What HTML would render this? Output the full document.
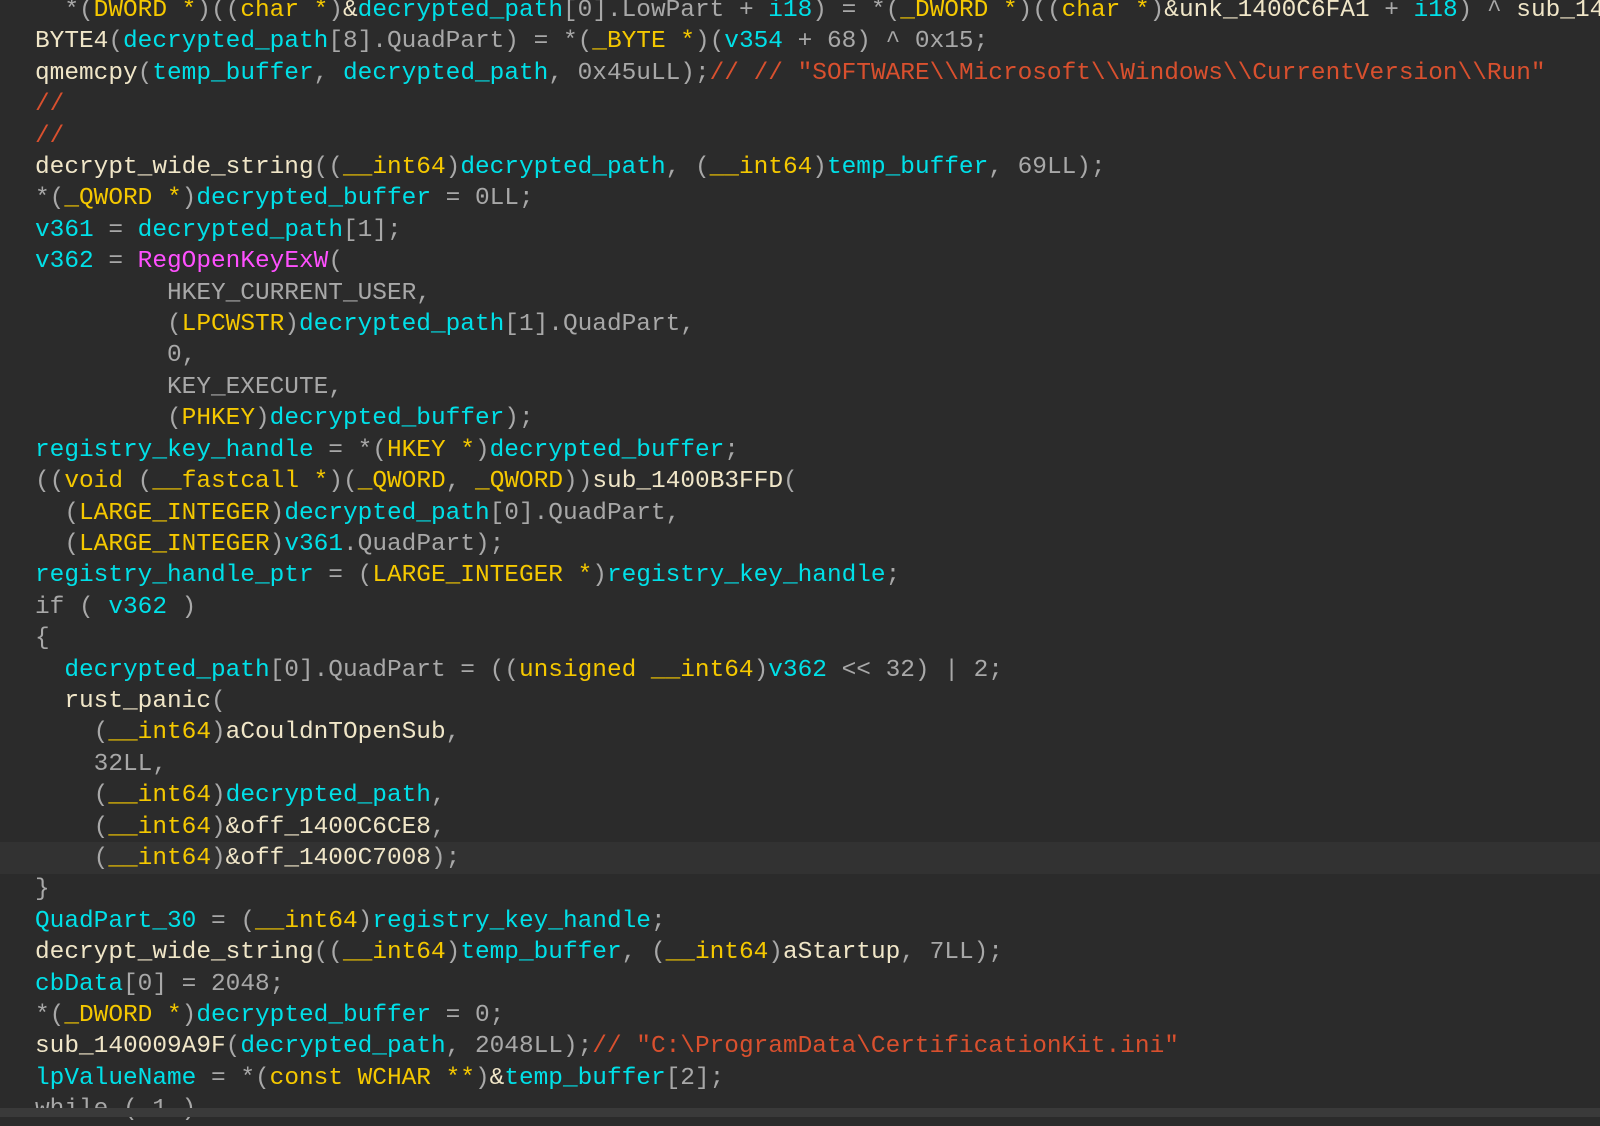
<!DOCTYPE html>
<html><head><meta charset="utf-8"><style>
html,body{margin:0;padding:0;width:1600px;height:1117px;overflow:hidden;background:#2b2b2b}
#code{position:absolute;left:35px;top:-5px;width:1600px;font-family:"Liberation Mono",monospace;font-size:24.45px;line-height:31.4px;white-space:pre;color:#f0e6c8}
.hl{position:absolute;left:0;top:842px;width:1600px;height:32px;background:#323232}
.bot{position:absolute;left:0;top:1108px;width:1600px;height:9px;background:#3a3a3a}
.c{color:#00e0e8}.y{color:#f5c800}.g{color:#a8a8a8}.r{color:#d9502e}.m{color:#ff50ff}.w{color:#f0e6c8}
</style></head><body>
<div class="hl"></div>
<div id="code"><span class="g">  *(</span><span class="y">DWORD *</span><span class="g">)((</span><span class="y">char *</span><span class="g">)</span>&amp;<span class="c">decrypted_path</span><span class="g">[0].LowPart + </span><span class="c">i18</span><span class="g">) = *(</span><span class="y">_DWORD *</span><span class="g">)((</span><span class="y">char *</span><span class="g">)</span>&amp;unk_1400C6FA1<span class="g"> + </span><span class="c">i18</span><span class="g">) ^ </span>sub_14
BYTE4<span class="g">(</span><span class="c">decrypted_path</span><span class="g">[8].QuadPart) = *(</span><span class="y">_BYTE *</span><span class="g">)(</span><span class="c">v354</span><span class="g"> + 68) ^ 0x15;</span>
qmemcpy<span class="g">(</span><span class="c">temp_buffer</span><span class="g">, </span><span class="c">decrypted_path</span><span class="g">, 0x45uLL);</span><span class="r">// // "SOFTWARE\\Microsoft\\Windows\\CurrentVersion\\Run"</span>
<span class="r">//</span>
<span class="r">//</span>
decrypt_wide_string<span class="g">((</span><span class="y">__int64</span><span class="g">)</span><span class="c">decrypted_path</span><span class="g">, (</span><span class="y">__int64</span><span class="g">)</span><span class="c">temp_buffer</span><span class="g">, 69LL);</span>
<span class="g">*(</span><span class="y">_QWORD *</span><span class="g">)</span><span class="c">decrypted_buffer</span><span class="g"> = 0LL;</span>
<span class="c">v361</span><span class="g"> = </span><span class="c">decrypted_path</span><span class="g">[1];</span>
<span class="c">v362</span><span class="g"> = </span><span class="m">RegOpenKeyExW</span><span class="g">(</span>
<span class="g">         HKEY_CURRENT_USER,</span>
<span class="g">         (</span><span class="y">LPCWSTR</span><span class="g">)</span><span class="c">decrypted_path</span><span class="g">[1].QuadPart,</span>
<span class="g">         0,</span>
<span class="g">         KEY_EXECUTE,</span>
<span class="g">         (</span><span class="y">PHKEY</span><span class="g">)</span><span class="c">decrypted_buffer</span><span class="g">);</span>
<span class="c">registry_key_handle</span><span class="g"> = *(</span><span class="y">HKEY *</span><span class="g">)</span><span class="c">decrypted_buffer</span><span class="g">;</span>
<span class="g">((</span><span class="y">void</span><span class="g"> (</span><span class="y">__fastcall *</span><span class="g">)(</span><span class="y">_QWORD</span><span class="g">, </span><span class="y">_QWORD</span><span class="g">))</span>sub_1400B3FFD<span class="g">(</span>
<span class="g">  (</span><span class="y">LARGE_INTEGER</span><span class="g">)</span><span class="c">decrypted_path</span><span class="g">[0].QuadPart,</span>
<span class="g">  (</span><span class="y">LARGE_INTEGER</span><span class="g">)</span><span class="c">v361</span><span class="g">.QuadPart);</span>
<span class="c">registry_handle_ptr</span><span class="g"> = (</span><span class="y">LARGE_INTEGER *</span><span class="g">)</span><span class="c">registry_key_handle</span><span class="g">;</span>
<span class="g">if ( </span><span class="c">v362</span><span class="g"> )</span>
<span class="g">{</span>
<span class="c">  decrypted_path</span><span class="g">[0].QuadPart = ((</span><span class="y">unsigned __int64</span><span class="g">)</span><span class="c">v362</span><span class="g"> &lt;&lt; 32) | 2;</span>
  rust_panic<span class="g">(</span>
<span class="g">    (</span><span class="y">__int64</span><span class="g">)</span>aCouldnTOpenSub<span class="g">,</span>
<span class="g">    32LL,</span>
<span class="g">    (</span><span class="y">__int64</span><span class="g">)</span><span class="c">decrypted_path</span><span class="g">,</span>
<span class="g">    (</span><span class="y">__int64</span><span class="g">)</span>&amp;off_1400C6CE8<span class="g">,</span>
<span class="g">    (</span><span class="y">__int64</span><span class="g">)</span>&amp;off_1400C7008<span class="g">);</span>
<span class="g">}</span>
<span class="c">QuadPart_30</span><span class="g"> = (</span><span class="y">__int64</span><span class="g">)</span><span class="c">registry_key_handle</span><span class="g">;</span>
decrypt_wide_string<span class="g">((</span><span class="y">__int64</span><span class="g">)</span><span class="c">temp_buffer</span><span class="g">, (</span><span class="y">__int64</span><span class="g">)</span>aStartup<span class="g">, 7LL);</span>
<span class="c">cbData</span><span class="g">[0] = 2048;</span>
<span class="g">*(</span><span class="y">_DWORD *</span><span class="g">)</span><span class="c">decrypted_buffer</span><span class="g"> = 0;</span>
sub_140009A9F<span class="g">(</span><span class="c">decrypted_path</span><span class="g">, 2048LL);</span><span class="r">// "C:\ProgramData\CertificationKit.ini"</span>
<span class="c">lpValueName</span><span class="g"> = *(</span><span class="y">const WCHAR **</span><span class="g">)</span>&amp;<span class="c">temp_buffer</span><span class="g">[2];</span>
<span class="g">while ( 1 )</span></div>
<div class="bot"></div>
</body></html>
